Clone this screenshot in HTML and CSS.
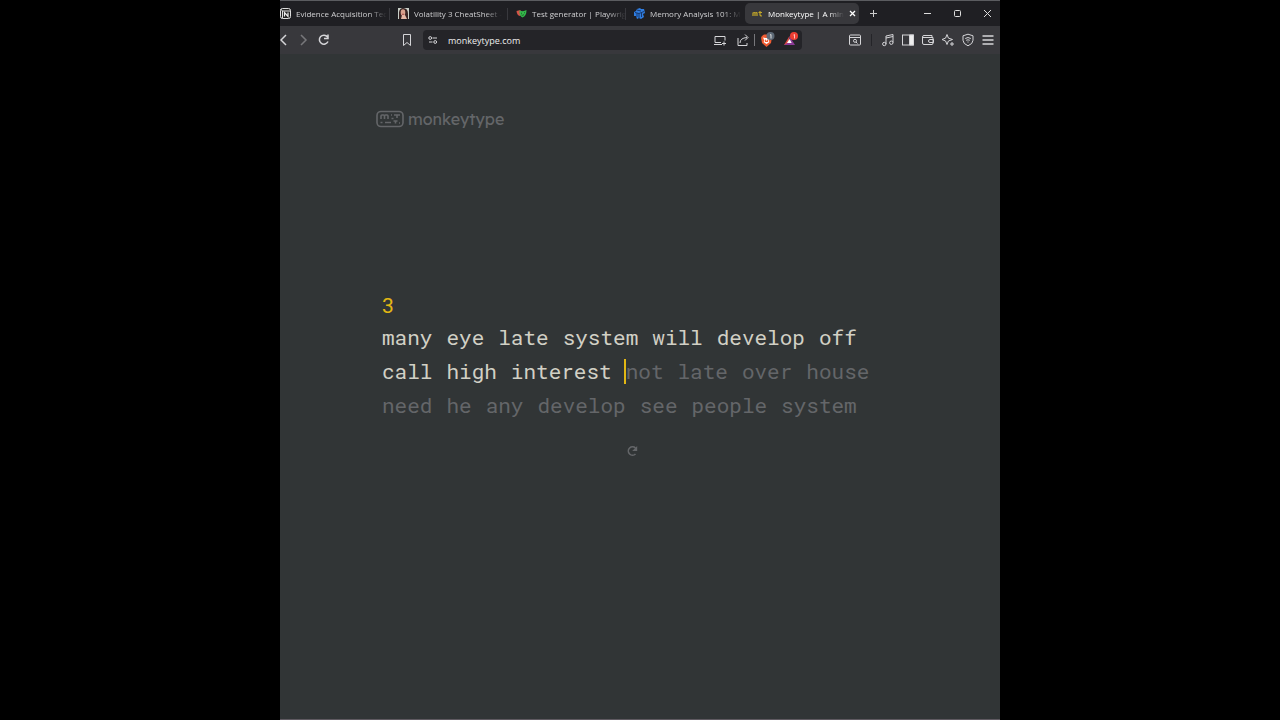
FILE: index.html
```html
<!DOCTYPE html>
<html lang="en">
<head>
    <meta charset="UTF-8">
    <meta name="viewport" content="width=device-width, initial-scale=1.0">
    <title>Monkeytype | A minimalistic typing test</title>
    <link rel="stylesheet" href="styles.css">
</head>
<body>
    <div class="browser">
        <div class="tab-bar">
            <a class="tab first" href="#">
                <svg width="11" height="11" viewBox="0 0 11 11"><rect x=".5" y=".5" width="10" height="10" rx="2" fill="#222" stroke="#ddd"/><path d="M.5 1l2 2h8M2.500 3v7" fill="none" stroke="#ddd"/><path d="M4.500 8.500V4.500l3.500 4v-4" fill="none" stroke="#eee" stroke-width="1.200"/></svg>
                <span>Evidence Acquisition Tec</span>
            </a>
            <a class="tab" href="#">
                <svg width="11" height="11" viewBox="0 0 11 11"><path fill="#c9cfc8" d="M0 0h11v11H0z"/><path fill="#372322" d="M1 11V4q1-4 4-4 5 0 5 6v5z"/><ellipse cx="5" cy="4.500" rx="2.300" ry="3.200" fill="#d9a18d"/><path fill="#e5b8a6" d="M3 11l1-4h3l2 4z"/><path d="M4 6q1 1 2 0" stroke="#a94a48" fill="none"/></svg>
                <span>Volatility 3 CheatSheet -</span>
            </a>
            <a class="tab" href="#">
                <svg width="11" height="11" viewBox="0 0 11 11"><path fill="#d65348" d="M.5 3l4-1v6Q1 8 .5 3z"/><path fill="#35b84b" d="M3.500 2.500q4 1.500 7-.5 0 6-4 7.500Q3 8 3.500 2.500z"/><path stroke="#176a29" fill="none" d="M5 5l1 .5M8 5l1-.5M5.500 7q1.500 1 2.500-.5"/></svg>
                <span>Test generator | Playwrig</span>
            </a>
            <a class="tab" href="#">
                <svg width="11" height="11" viewBox="0 0 11 11"><path fill="#2f7de1" d="M3 1l3-1 1 1h3l1 4-2 1 1 3-3 2-2-1-2 1-1-3H0V4l2-1z"/><path stroke="#17386c" fill="none" d="M1 4.500l4 1 5-2M5 5.500V10M3 2l4 1M3 5v4M7.500 5v4"/></svg>
                <span>Memory Analysis 101: M</span>
            </a>
            <div class="tab active">
                <svg width="11" height="11" viewBox="0 0 11 11"><path d="M1 8V5q1.500-1 2 0v3M3 5q2-1 2 0v3M8 3v4q0 1 2 1M6.500 4.500H10" fill="none" stroke="#c5a928" stroke-width="1.200"/></svg>
                <span>Monkeytype | A min</span>
                <button class="tab-close" aria-label="Close tab"><svg width="7" height="7" viewBox="0 0 7 7"><path d="M1 1l5 5M6 1L1 6" stroke="#fff" stroke-width="1.300"/></svg></button>
            </div>
            <button class="icon-btn new-tab" aria-label="New tab"><svg width="9" height="9" viewBox="0 0 9 9"><path d="M4.500 1v7M1 4.500h7" stroke="#ccc"/></svg></button>
            <div class="window-controls">
                <button aria-label="Minimize"><svg width="9" height="9" viewBox="0 0 9 9"><path d="M1 4.500h7" stroke="#ddd"/></svg></button>
                <button aria-label="Maximize"><svg width="9" height="9" viewBox="0 0 9 9"><rect x="1.500" y="1.500" width="6" height="6" rx="1" fill="none" stroke="#ddd"/></svg></button>
                <button aria-label="Close"><svg width="9" height="9" viewBox="0 0 9 9"><path d="M1 1l7 7M8 1L1 8" stroke="#ddd"/></svg></button>
            </div>
        </div>

        <div class="toolbar">
            <div class="nav">
                <button class="icon-btn" aria-label="Back"><svg class="line" width="14" height="14" viewBox="0 0 14 14"><path d="M9 2L4 7l5 5" stroke-width="1.500"/></svg></button>
                <button class="icon-btn dim" aria-label="Forward"><svg class="line" width="14" height="14" viewBox="0 0 14 14"><path d="M4 2l5 5-5 5" stroke-width="1.500"/></svg></button>
                <button class="icon-btn" aria-label="Reload"><svg class="line" width="14" height="14" viewBox="0 0 14 14"><path d="M10.500 4A4.500 4.500 0 1 0 11 8.500M11 1.500v4H7" stroke-width="1.500"/></svg></button>
            </div>
            <button class="icon-btn bookmark" aria-label="Bookmark"><svg class="line" width="14" height="14" viewBox="0 0 14 14"><path d="M3.500 1.500h7v11L7 9.500l-3.500 3z"/></svg></button>
            <div class="address">
                <svg class="line" width="10" height="10" viewBox="0 0 10 10"><circle cx="2.200" cy="3" r="1.400"/><circle cx="7.200" cy="7" r="1.400"/><path d="M4.500 3H9M1 7h3.500"/></svg>
                <input type="text" value="monkeytype.com" aria-label="Address">
                <button class="icon-btn" aria-label="Install"><svg class="line" width="14" height="14" viewBox="0 0 14 14"><path d="M12 7.500V3.500H2v6h6M1 11.500h8M11 8.500v4M9 10.500h4"/></svg></button>
                <button class="icon-btn" aria-label="Share"><svg class="line" width="14" height="14" viewBox="0 0 14 14"><path d="M2 5v7.500h9V10M4 10q0-5 7-5.500M9 1.500l3 3-3 3"/></svg></button>
                <span class="divider"></span>
                <button class="icon-btn" aria-label="Shields"><svg width="16" height="16" viewBox="0 0 16 16"><path fill="#ee5b32" d="M3 4l2-1.500h5L12 4l1 1-1 6-4.500 4L3 11 2 5.500z"/><path fill="#fff" d="M4 5.500l2.500.5h2l2.500-.5L9.500 9l1 1-3 2-3-2 1-1z"/><path fill="#ee5b32" d="M6 7l1.500 2L9 7v3H6z"/><circle cx="11.500" cy="4" r="4" fill="#5d6976"/><path d="M11 3l1-.5v4" stroke="#ddd" fill="none"/></svg></button>
                <button class="icon-btn" aria-label="Rewards"><svg width="16" height="16" viewBox="0 0 16 16"><path fill="#de493d" d="M7.500 4L2 13h5z"/><path fill="#8b3a96" d="M7.500 4L13 13H2l5.500-3z"/><path fill="#fff" d="M7.500 7l2.200 4H5z"/><circle cx="12" cy="4" r="4" fill="#ed3e33"/><path d="M11.500 3l1-.5v4" stroke="#ffc2b8" fill="none"/></svg></button>
            </div>
            <div class="tools">
                <button class="icon-btn" aria-label="Search tabs"><svg class="line" width="14" height="14" viewBox="0 0 14 14"><rect x="1.500" y="2" width="11" height="10" rx="1"/><path d="M2 4.500h10M8 9l1.500 1.500"/><circle cx="7" cy="7.800" r="1.500"/></svg></button>
                <span class="divider dark"></span>
                <button class="icon-btn" aria-label="Media"><svg class="line" width="14" height="14" viewBox="0 0 14 14"><path d="M5 11V3l7-1.500v8M5 5l7-1.500"/><circle cx="3.300" cy="11" r="1.700"/><circle cx="10.300" cy="9.700" r="1.700"/></svg></button>
                <button class="icon-btn" aria-label="Sidebar"><svg class="line" width="14" height="14" viewBox="0 0 14 14"><rect x="1.500" y="2" width="11" height="10"/><path d="M8.500 2h4v10h-4z" fill="#eee"/></svg></button>
                <button class="icon-btn" aria-label="Wallet"><svg class="line" width="14" height="14" viewBox="0 0 14 14"><path d="M11 4.500V2.500H3Q1.500 2.500 1.500 4v6q0 1.500 1.500 1.500h8q1 0 1-1.500V4.500H2M12.500 6.500H9Q7.500 6.500 7.500 8T9 9.500h3.500z"/></svg></button>
                <button class="icon-btn" aria-label="Assistant"><svg class="line" width="14" height="14" viewBox="0 0 14 14"><path d="M6 1.500l1.400 3.600L11.500 6.500 7.400 8 6 11.500 4.600 8 1 6.500l3.600-1.400zM11 9v4M9 11h4"/></svg></button>
                <button class="icon-btn" aria-label="VPN"><svg class="line" width="14" height="14" viewBox="0 0 14 14"><path d="M7 1.200l5 1.600v4.500q0 3.500-5 5.500-5-2-5-5.500V2.800zM4.200 5.500q2.800-2 5.600 0M5.200 7.300q1.800-1 3.600 0M6.500 9h1"/></svg></button>
                <button class="icon-btn" aria-label="Menu"><svg class="line" width="14" height="14" viewBox="0 0 14 14"><path d="M1.500 3h11M1.500 7h11M1.500 11h11" stroke-width="1.500"/></svg></button>
            </div>
        </div>

        <div class="page">
            <header>
                <a class="logo" href="#">
                    <svg width="28" height="18" viewBox="0 0 28 18"><rect x="1" y="1.500" width="26" height="15" rx="4"/><path d="M5 9V6q0-1 1-1h1.500q1 0 1 1v3M8.500 6q0-1 1-1H11q1 0 1 1v3M15 5h1M18 5h6M21 5v3M15.500 8.500h2M4.500 12.500h2M9 12.500h6M17.500 11h4M19.500 11v2.500M23 13h1"/></svg>
                    <span>monkeytype</span>
                </a>
            </header>
            <main class="test">
                <div class="timer">3</div>
                <div class="words">
                    <span class="typed">many</span>
                    <span class="typed">eye</span>
                    <span class="typed">late</span>
                    <span class="typed">system</span>
                    <span class="typed">will</span>
                    <span class="typed">develop</span>
                    <span class="typed">off</span>
                    <span class="typed">call</span>
                    <span class="typed">high</span>
                    <span class="typed">interest</span>
                    <span class="current">not</span>
                    <span>late</span>
                    <span>over</span>
                    <span>house</span>
                    <span>need</span>
                    <span>he</span>
                    <span>any</span>
                    <span>develop</span>
                    <span>see</span>
                    <span>people</span>
                    <span>system</span>
                </div>
                <button class="restart" aria-label="Restart test"><svg width="12" height="12" viewBox="0 0 12 12"><path d="M9.500 9a4.200 4.200 0 1 1 0-6" fill="none" stroke="#646669" stroke-width="1.600"/><path d="M11.200 1v5h-5z" fill="#646669"/></svg></button>
            </main>
        </div>
    </div>
</body>
</html>
```
FILE: styles.css
```css
* {
    box-sizing: border-box;
}
body {
    margin: 0;
    background-color: #000;
    font-family: "Open Sans", sans-serif;
    font-size: 9px;
}
button {
    display: flex;
    align-items: center;
    justify-content: center;
    padding: 0;
    border: none;
    background: none;
    cursor: pointer;
}
a {
    color: inherit;
    text-decoration: none;
}
svg {
    flex-shrink: 0;
}
.browser {
    display: flex;
    flex-direction: column;
    width: 56.25%;
    min-height: 100vh;
    margin: 0 auto;
    overflow: hidden;
    background-color: #313536;
    border-top: 1px solid #5b5c60;
    border-bottom: 1px solid #5f5a61;
}

/* tabs */
.tab-bar {
    display: flex;
    align-items: center;
    height: 25px;
    background-color: #1f1f23;
    color: #d0d0d2;
    font-size: 8px;
}
.tab {
    display: flex;
    align-items: center;
    gap: 5px;
    width: 118px;
    height: 21px;
    padding: 0 4px 0 9px;
    white-space: nowrap;
}
.tab + .tab {
    background: linear-gradient(#38383d, #38383d) left center / 1px 12px no-repeat;
}
.tab span {
    mask-image: linear-gradient(to right, #000 80%, transparent);
}
.tab.first {
    width: 109px;
    padding-left: 0;
}
.tab.active {
    width: 114px;
    margin-left: 2px;
    padding: 0 5px 0 7px;
    border-radius: 5px;
    background: #38383c;
    color: #fff;
}
.tab-close {
    width: 10px;
    height: 10px;
    margin-left: auto;
}
.icon-btn {
    width: 20px;
    height: 20px;
}
.new-tab {
    margin-left: 4px;
}
.window-controls {
    display: flex;
    gap: 4px;
    margin-left: auto;
}
.window-controls button {
    width: 26px;
    height: 25px;
}

/* toolbar */
.toolbar {
    display: flex;
    align-items: center;
    height: 28px;
    padding-right: 2px;
    background-color: #38383c;
}
.line {
    fill: none;
    stroke: #d5d5d8;
}
.nav {
    display: flex;
    margin-left: -6px;
}
.dim {
    opacity: 0.4;
}
.bookmark {
    margin-left: 63px;
}
.address {
    display: flex;
    flex: 1;
    align-items: center;
    height: 20px;
    margin-left: 6px;
    padding: 0 1px 0 5px;
    border-radius: 4px;
    background-color: #242428;
}
.address input {
    flex: 1;
    min-width: 0;
    padding: 0 0 0 10px;
    border: none;
    outline: none;
    background: none;
    color: #eee;
    font: inherit;
}
.address .icon-btn {
    width: 23px;
}
.divider {
    width: 1px;
    height: 12px;
    background-color: #77777b;
}
.dark {
    margin: 0 6px;
    background-color: #242428;
}
.tools {
    display: flex;
    align-items: center;
    margin-left: 43px;
}

/* typing test */
.page {
    flex: 1;
    padding: 56px 96px;
    color: #646669;
}
.logo {
    display: inline-flex;
    align-items: center;
    gap: 4px;
    height: 18px;
    font-family: "Lexend Deca", Lato, sans-serif;
    font-size: 16px;
}
.logo svg {
    fill: none;
    stroke: #646669;
    stroke-width: 1.6;
}
.test {
    width: 500px;
    max-width: 100%;
    margin: 159px 0 0 6px;
    font-family: "Roboto Mono", "Liberation Mono", monospace;
    font-size: 21px;
}
.timer {
    color: #e2b714;
    line-height: 30px;
}
.words {
    display: flex;
    flex-wrap: wrap;
    column-gap: 14px;
    line-height: 34px;
}
.typed {
    color: #d1d0c5;
}
.current {
    position: relative;
}
.current::before {
    content: "";
    position: absolute;
    top: 5px;
    left: -2px;
    width: 2px;
    height: 25px;
    background-color: #e2b714;
}
.restart {
    width: 24px;
    height: 24px;
    margin: 17px auto 0;
}
```
